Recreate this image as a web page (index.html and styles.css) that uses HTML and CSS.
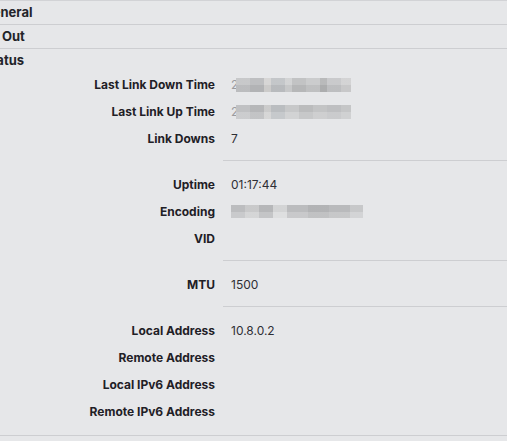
FILE: index.html
```html
<!DOCTYPE html>
<html lang="en">
<head>
<meta charset="utf-8">
<title>Interface Status</title>
<link rel="stylesheet" href="styles.css">
</head>
<body>
<div class="panel">
  <div class="section-head">General</div>
  <div class="section-head">Tx Out</div>
  <div class="section-head open">Status</div>
  <div class="group first">
    <div class="row"><div class="label">Last Link Down Time</div><div class="value"><span class="lead">2</span><span class="redact w115"></span></div></div>
    <div class="row"><div class="label">Last Link Up Time</div><div class="value"><span class="lead">2</span><span class="redact w115 alt"></span></div></div>
    <div class="row"><div class="label">Link Downs</div><div class="value">7</div></div>
  </div>
  <div class="group">
    <div class="row"><div class="label">Uptime</div><div class="value">01:17:44</div></div>
    <div class="row"><div class="label">Encoding</div><div class="value"><span class="redact w132 enc"></span></div></div>
    <div class="row"><div class="label">VID</div><div class="value"></div></div>
  </div>
  <div class="group">
    <div class="row"><div class="label">MTU</div><div class="value">1500</div></div>
  </div>
  <div class="group last">
    <div class="row"><div class="label">Local Address</div><div class="value">10.8.0.2</div></div>
    <div class="row"><div class="label">Remote Address</div><div class="value"></div></div>
    <div class="row"><div class="label">Local IPv6 Address</div><div class="value"></div></div>
    <div class="row"><div class="label">Remote IPv6 Address</div><div class="value"></div></div>
  </div>
</div>
</body>
</html>
```
FILE: styles.css
```css
html, body {
  margin: 0;
  padding: 0;
  background: #e6e7e9;
}
body {
  font-family: Inter, "Noto Sans", "Liberation Sans", sans-serif;
  font-size: 12px;
  color: #23242a;
  overflow: hidden;
}
.panel {
  margin-left: -17px;
  border-top: 1px solid #d2d3d6;
  border-bottom: 1px solid #cdced1;
}
.section-head {
  height: 23px;
  line-height: 23px;
  font-size: 13px;
  font-weight: 700;
  border-bottom: 1px solid #cdced1;
}
.section-head.open {
  border-bottom: none;
  height: 22px;
  line-height: 22px;
}
.group {
  margin-left: 240px;
  padding: 10px 0 8px;
  border-bottom: 1px solid #cdced1;
}
.group.first { padding-top: 0; }
.group.last { border-bottom: none; padding-bottom: 10px; }
.row {
  display: flex;
  height: 27px;
  align-items: center;
  margin-left: -240px;
}
.label {
  width: 232px;
  text-align: right;
  font-weight: 700;
  color: #1f2026;
  flex: none;
}
.value {
  margin-left: 16px;
  color: #2e2f35;
  display: flex;
  align-items: center;
}
.lead {
  color: #9a9b9f;
  width: 5px;
  overflow: hidden;
}
.redact {
  display: inline-block;
  height: 14px;
  background:
    linear-gradient(to bottom, rgba(255,255,255,0.08) 0 50%, rgba(0,0,0,0.04) 50% 100%),
    linear-gradient(to right,
      #c3c4c6 0 14px, #b9babc 14px 28px, #d4d3d2 28px 35px, #bfc2c5 35px 49px,
      #cfd0d1 49px 56px, #bdbebf 56px 70px, #c7c8c9 70px 84px, #b3b4b5 84px 91px,
      #c5c6c8 91px 105px, #d0d0d1 105px 115px);
}
.redact.alt {
  background:
    linear-gradient(to bottom, rgba(0,0,0,0.03) 0 50%, rgba(255,255,255,0.1) 50% 100%),
    linear-gradient(to right,
      #c6c7c9 0 14px, #bcbdbf 14px 28px, #d2d2d2 28px 35px, #c0c3c6 35px 49px,
      #cdcecf 49px 63px, #c1c2c3 63px 77px, #c9cacb 77px 91px, #c4c5c7 91px 105px,
      #cbcccd 105px 115px);
}
.redact.enc {
  height: 13px;
  background:
    linear-gradient(to bottom, rgba(0,0,0,0.03) 0 50%, rgba(255,255,255,0.12) 50% 100%),
    linear-gradient(to right,
      #c2c3c5 0 14px, #cfd0d1 14px 28px, #bcbdbf 28px 42px, #dadbdc 42px 56px,
      #c1c2c4 56px 77px, #b8b9bb 77px 98px, #bfc0c2 98px 119px, #cdced0 119px 132px);
}
.w115 { width: 115px; }
.w132 { width: 132px; }
```
